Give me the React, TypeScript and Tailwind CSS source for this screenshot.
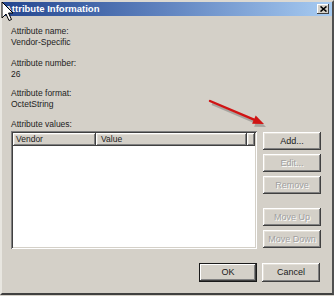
import React from "react";

const raised =
  "shadow-[inset_-1px_-1px_#404040,inset_1px_1px_#ffffff,inset_-2px_-2px_#808080,inset_2px_2px_#e4e0d8]";

function Btn({
  children,
  disabled,
  def,
}: {
  children: React.ReactNode;
  disabled?: boolean;
  def?: boolean;
}) {
  return (
    <div
      className={`flex h-[18px] w-[58px] items-center justify-center bg-[#d4d0c8] text-[9px] leading-none ${
        def
          ? "h-[19px] border border-[#1a1a1a] shadow-[inset_-1px_-1px_#404040,inset_1px_1px_#ffffff,inset_-2px_-2px_#808080]"
          : raised
      } ${
        disabled
          ? "text-[#a0a0a0] [text-shadow:1px_1px_0_#ffffff]"
          : "text-[#1a1a1a]"
      }`}
    >
      {children}
    </div>
  );
}

export default function App() {
  return (
    <div
      className="relative h-[296px] w-[334px] overflow-hidden bg-[#d4d0c8] text-[#222]"
      style={{ fontFamily: '"Liberation Sans", Arial, sans-serif' }}
    >
      <div className="flex h-[295px] w-[334px] flex-col border-l-2 border-r-2 border-t-2 border-b-2 border-l-[#e8e6e0] border-t-[#dcd9d2] border-r-[#505050] border-b-[#404040]">
        {/* title bar */}
        <div className="flex h-[14px] items-center justify-between bg-gradient-to-r from-[#24468f] via-[#6184c0] to-[#a8ccf2] pl-[3px] pr-[3px]">
          <span className="text-[9.5px] font-bold leading-none text-white">
            Attribute Information
          </span>
          <div className="flex h-[10px] w-[12px] items-center justify-center bg-[#d4d0c8] shadow-[inset_-1px_-1px_#404040,inset_1px_1px_#ffffff]">
            <svg width="7" height="6" viewBox="0 0 7 6">
              <path d="M0.5 0.5 L6.5 5.5 M6.5 0.5 L0.5 5.5" stroke="#000" strokeWidth="1.6" />
            </svg>
          </div>
        </div>

        {/* body */}
        <div className="flex flex-col pl-[9px] pr-[10px] text-[8.5px] leading-[11px]">
          <div className="mt-[10px]">Attribute name:</div>
          <div>Vendor-Specific</div>
          <div className="mt-[10px]">Attribute number:</div>
          <div>26</div>
          <div className="mt-[8px]">Attribute format:</div>
          <div>OctetString</div>
          <div className="mt-[9px]">Attribute values:</div>

          <div className="mt-[1px] flex gap-[6px]">
            {/* list */}
            <div className="flex h-[118px] w-[246px] flex-col bg-white p-[2px] shadow-[inset_1px_1px_#808080,inset_-1px_-1px_#ffffff,inset_2px_2px_#404040,inset_-2px_-2px_#d4d0c8]">
              <div className="flex h-[13px] text-[8.5px] leading-none text-[#222]">
                <div className={`flex w-[83px] items-center bg-[#d4d0c8] pl-[3px] ${raised}`}>
                  Vendor
                </div>
                <div className={`flex w-[151px] items-center bg-[#d4d0c8] pl-[5px] ${raised}`}>
                  Value
                </div>
                <div className={`flex-1 bg-[#d4d0c8] ${raised}`} />
              </div>
              <div className="flex-1 bg-white" />
            </div>

            {/* side buttons */}
            <div className="mt-[1px] flex flex-col">
              <Btn>Add...</Btn>
              <div className="mt-[4px]">
                <Btn disabled>Edit...</Btn>
              </div>
              <div className="mt-[4px]">
                <Btn disabled>Remove</Btn>
              </div>
              <div className="mt-[14px]">
                <Btn disabled>Move Up</Btn>
              </div>
              <div className="mt-[4px]">
                <Btn disabled>Move Down</Btn>
              </div>
            </div>
          </div>

          <div className="mt-[14px] flex justify-end gap-[5px] pr-[2px]">
            <Btn def>OK</Btn>
            <div className="flex h-[19px]">
              <div className={`flex h-[19px] w-[58px] items-center justify-center bg-[#d4d0c8] text-[9px] leading-none text-[#1a1a1a] ${raised}`}>
                Cancel
              </div>
            </div>
          </div>
        </div>
      </div>

      {/* red arrow annotation */}
      <svg
        className="absolute left-[205px] top-[95px]"
        width="66"
        height="36"
        viewBox="0 0 66 36"
      >
        <g opacity="0.35" transform="translate(2 3)">
          <path d="M5 6 L49 24.7" stroke="#555" strokeWidth="2.4" />
          <path d="M59 29 L47.1 28.8 L50.7 20.6 Z" fill="#555" />
        </g>
        <path d="M5 6 L49 24.7" stroke="#d01414" strokeWidth="2.4" strokeLinecap="round" />
        <path d="M59 29 L47.1 28.8 L50.7 20.6 Z" fill="#d01414" />
      </svg>

      {/* mouse cursor */}
      <svg
        className="absolute left-[1px] top-[1px]"
        width="13"
        height="21"
        viewBox="0 0 13 21"
      >
        <path
          d="M1 1 L1 17 L5 13 L8 19.5 L10.5 18.5 L7.5 12 L12 12 Z"
          fill="#fff"
          stroke="#000"
          strokeWidth="1"
          strokeLinejoin="miter"
        />
      </svg>
    </div>
  );
}
